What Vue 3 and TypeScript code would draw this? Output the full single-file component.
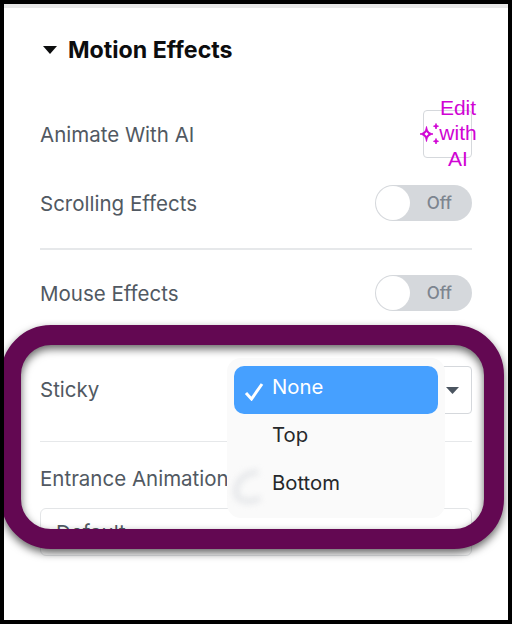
<script setup lang="ts">
const items = ['None', 'Top', 'Bottom']
</script>

<template>
  <div class="frame">
    <div class="panel">
      <h2 class="title">
        <svg class="caret" width="14" height="8" viewBox="0 0 14 8"><path d="M0 0H14L7 8Z" fill="#0c0d0e" /></svg>
        Motion Effects
      </h2>
      <div class="row ai-row">
        <span class="label">Animate With AI</span>
        <button class="ai-btn">
          <svg class="spark" width="24" height="24" viewBox="0 0 24 24" fill="#d004d4" stroke="#d004d4" stroke-width="0.9">
            <path fill-rule="evenodd" d="M7.500 4.500C8.300 9 9.500 10.700 14 12 9.500 13.300 8.300 15 7.500 19.500 6.700 15 5.500 13.300 1 12 5.500 10.700 6.700 9 7.500 4.500ZM7.500 9C7 10.500 6.200 11.300 4.700 12 6.200 12.700 7 13.500 7.500 15 8 13.500 8.800 12.700 10.300 12 8.800 11.300 8 10.500 7.500 9Z" />
            <path d="M17 1.500C17.400 3.300 17.800 3.700 19.500 4.200 17.800 4.700 17.400 5.100 17 7 16.600 5.100 16.200 4.700 14.500 4.200 16.200 3.700 16.600 3.300 17 1.500ZM17 16.500C17.400 18.300 17.800 18.700 19.500 19.300 17.800 19.800 17.400 20.200 17 22 16.600 20.200 16.200 19.800 14.500 19.300 16.200 18.700 16.600 18.300 17 16.500Z" />
          </svg>
          <span class="ai-text">Edit with AI</span>
        </button>
      </div>
      <div class="row scroll-row">
        <span class="label">Scrolling Effects</span>
        <div class="toggle"><span class="knob"></span><span class="off">Off</span></div>
      </div>
      <hr class="rule first" />
      <div class="row mouse-row">
        <span class="label">Mouse Effects</span>
        <div class="toggle"><span class="knob"></span><span class="off">Off</span></div>
      </div>
      <div class="row sticky-row">
        <span class="label sticky-label">Sticky</span>
        <div class="select">
          <svg width="13" height="7" viewBox="0 0 13 7"><path d="M0 0H13L6.500 7Z" fill="#4b5560" /></svg>
        </div>
        <div class="menu">
          <div v-for="(item, i) in items" :key="item" class="option" :class="{ active: i === 0 }">
            <svg v-if="i === 0" class="check" width="20" height="19" viewBox="0 0 20 19">
              <path d="M2 11L7.500 17L18 2" fill="none" stroke="#fff" stroke-width="3" />
            </svg>
            <span>{{ item }}</span>
          </div>
          <svg class="smudge" width="46" height="46" viewBox="0 0 46 46">
            <path d="M30 7C16 8 8 16 8 28C9 37 24 38 32 33" fill="none" stroke="#e2e4e7" stroke-width="5" />
          </svg>
        </div>
      </div>
      <hr class="rule second" />
      <div class="label entrance">Entrance Animation</div>
      <div class="input"><span>Default</span></div>
    </div>
    <div class="annotation"></div>
  </div>
</template>

<style>
html, body { margin: 0; background: #fff; }
</style>

<style scoped>
.frame {
  position: relative;
  box-sizing: border-box;
  width: 512px;
  height: 624px;
  overflow: hidden;
  border: 4px solid #000;
  background: #fff;
  font-family: Inter, "Liberation Sans", sans-serif;
}
.panel {
  box-sizing: border-box;
  height: 100%;
  padding: 0 36px;
  border-top: 4px solid #e8e8e8;
}
.title {
  display: flex;
  align-items: center;
  gap: 11px;
  height: 28px;
  margin: 28px 0 0;
  font-size: 23.200px;
  font-weight: 700;
  color: #0c0d0e;
  white-space: nowrap;
}
.caret { margin-left: 3px; }
.row {
  position: relative;
  display: flex;
  align-items: center;
  justify-content: space-between;
}
.label {
  color: #515962;
  font-size: 20.500px;
  white-space: nowrap;
}
.sticky-label { margin-top: -2px; }
.ai-row { height: 48px; margin-top: 46px; }
.ai-btn {
  display: flex;
  align-items: center;
  justify-content: center;
  box-sizing: border-box;
  width: 49px;
  height: 48px;
  padding: 0;
  border: 1px solid #d5d8dc;
  border-radius: 4px;
  background: transparent;
  white-space: normal;
}
.spark { flex: none; margin-left: -10px; margin-right: -5px; }
.ai-text {
  flex: none;
  width: 40px;
  margin-top: -2px;
  margin-right: -12px;
  color: #d004d4;
  font: 21px/25.500px "Liberation Sans", sans-serif;
  text-align: center;
}
.scroll-row { height: 36px; margin-top: 27px; }
.toggle {
  position: relative;
  box-sizing: border-box;
  display: flex;
  justify-content: flex-end;
  align-items: center;
  width: 97px;
  height: 36px;
  padding-right: 20px;
  border-radius: 18px;
  background: #d5d8dc;
}
.knob {
  position: absolute;
  left: 1px;
  top: 1px;
  width: 34px;
  height: 34px;
  border-radius: 50%;
  background: #fff;
}
.off { color: #7d858f; font-size: 17px; font-weight: 500; }
.rule { margin: 0; border: 0; background: #e6e8ea; }
.rule.first { height: 2px; margin-top: 27px; }
.mouse-row { height: 36px; margin-top: 25px; }
.sticky-row { height: 48px; margin-top: 55px; }
.select {
  display: flex;
  align-items: center;
  justify-content: flex-end;
  box-sizing: border-box;
  width: 230px;
  height: 48px;
  padding-right: 12px;
  border: 1px solid #d5d8dc;
  border-radius: 4px;
}
.menu {
  position: absolute;
  left: 187px;
  top: -8px;
  box-sizing: border-box;
  width: 218px;
  height: 160px;
  padding: 8px 7px;
  border-radius: 14px;
  background: #fafafa;
}
.option {
  display: flex;
  align-items: center;
  height: 48px;
  padding-left: 38px;
  color: #26282b;
  font-size: 20.300px;
}
.option span { margin-top: -8px; }
.option.active {
  position: relative;
  border-radius: 10px;
  background: #46a0ff;
  color: #fff;
}
.check { position: absolute; left: 10px; top: 16px; }
.smudge {
  position: absolute;
  left: 1px;
  top: 107px;
  filter: blur(3px);
}
.rule.second { height: 1px; margin-top: 27px; }
.entrance { margin-top: 25px; line-height: 24px; }
.input {
  box-sizing: border-box;
  height: 48px;
  margin-top: 17px;
  padding: 11px 15px;
  border: 1px solid #e3e5e7;
  border-radius: 6px;
  color: #515962;
  font-size: 20.500px;
}
.annotation {
  position: absolute;
  left: -3px;
  top: 321px;
  box-sizing: border-box;
  width: 503px;
  height: 224px;
  border: 20px solid #630852;
  border-radius: 50px;
  filter: drop-shadow(0 4px 4px rgba(0, 0, 0, 0.6));
  pointer-events: none;
}
</style>
